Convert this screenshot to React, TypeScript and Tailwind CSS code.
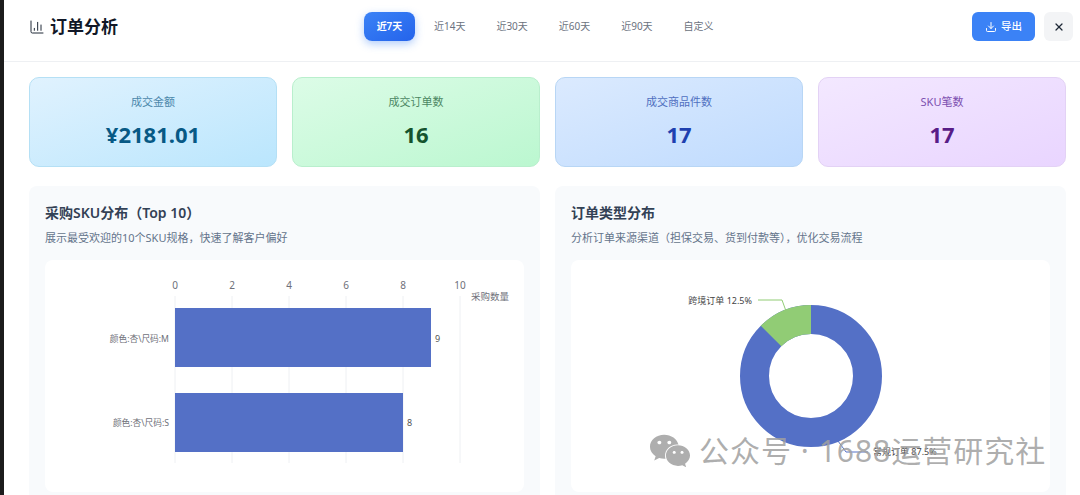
import { ChartColumn, Download, X } from "lucide-react";
import { FaWeixin } from "react-icons/fa";

const tabs = ["近14天", "近30天", "近60天", "近90天", "自定义"];

const stats = [
  { label: "成交金额", value: "¥2181.01", box: "from-[#e0f2fe] to-[#bae6fd] border-[#b5e0f5]", labelColor: "text-[#4b87ab]", valueColor: "text-[#075985]" },
  { label: "成交订单数", value: "16", box: "from-[#dcfce7] to-[#bbf7d0] border-[#b9efcd]", labelColor: "text-[#4c8763]", valueColor: "text-[#14532d]" },
  { label: "成交商品件数", value: "17", box: "from-[#dbeafe] to-[#bfdbfe] border-[#b8d6f5]", labelColor: "text-[#4f6fc0]", valueColor: "text-[#1e40af]" },
  { label: "SKU笔数", value: "17", box: "from-[#f3e8ff] to-[#e9d5ff] border-[#e3d2f5]", labelColor: "text-[#7c4fb0]", valueColor: "text-[#581c87]" },
];

function BarChart() {
  const ticks = [0, 2, 4, 6, 8, 10];
  return (
    <svg width="480" height="232" viewBox="45 260 480 232" className="block">
      {ticks.map((t) => (
        <g key={t}>
          <line x1={175 + t * 28.5} x2={175 + t * 28.5} y1="296" y2="463" stroke="#eef0f3" />
          <text x={175 + t * 28.5} y="289" textAnchor="middle" fontSize="10" fill="#6e7079">{t}</text>
        </g>
      ))}
      <rect x="175" y="308" width="256" height="59" fill="#5470c6" />
      <rect x="175" y="393" width="228" height="59" fill="#5470c6" />
      <text x="471" y="300" fontSize="9.5" fill="#6e7079">采购数量</text>
      <text x="169" y="342" textAnchor="end" fontSize="8.7" fill="#6e7079">颜色:杏\尺码:M</text>
      <text x="169" y="426" textAnchor="end" fontSize="8.7" fill="#6e7079">颜色:杏\尺码:S</text>
      <text x="435" y="342" fontSize="9" fill="#555">9</text>
      <text x="407" y="426" fontSize="9" fill="#555">8</text>
    </svg>
  );
}

function DonutChart() {
  return (
    <svg width="479" height="232" viewBox="571 260 479 232" className="block">
      <circle cx="811" cy="376" r="56.5" fill="none" stroke="#5470c6" strokeWidth="29" />
      <path d="M811 305 A71 71 0 0 0 760.8 325.8 L781.3 346.3 A42 42 0 0 1 811 334 Z" fill="#91cc75" />
      <polyline points="786,311 782,300 758,300" fill="none" stroke="#91cc75" />
      <text x="752" y="304" textAnchor="end" fontSize="9" fill="#444">跨境订单 12.5%</text>
      <polyline points="838,441 846,452 868,452" fill="none" stroke="#5470c6" />
      <text x="873" y="455" fontSize="9" fill="#444">常规订单 87.5%</text>
    </svg>
  );
}

export default function App() {
  return (
    <div
      className="relative h-[495px] w-[1080px] overflow-hidden border-l-4 border-[#1c1c1c] bg-white"
      style={{ fontFamily: '"Noto Sans", "Noto Sans CJK SC", sans-serif' }}
    >
      <header className="flex h-[62px] items-start border-b border-[#eef0f3] pl-[25px] pr-[7px] pt-[11px]">
        <div className="mt-[4px] flex w-[335px] items-center gap-[5px]">
          <ChartColumn className="h-[16px] w-[16px] text-[#1f2937]" strokeWidth={1.5} />
          <h1 className="text-[17px] font-bold leading-[24px] text-[#111827]">订单分析</h1>
        </div>
        <nav className="flex h-[30px] flex-1 items-center">
          <button className="mr-[19px] flex h-[29px] w-[51px] items-center justify-center rounded-lg bg-gradient-to-br from-[#3b82f6] to-[#2563eb] text-[10px] font-semibold text-white shadow-[0_3px_8px_rgba(59,130,246,0.4)]">
            近7天
          </button>
          {tabs.map((t) => (
            <span key={t} className="w-[62.4px] shrink-0 text-[10px] text-[#6b7280]">
              {t}
            </span>
          ))}
        </nav>
        <button className="mr-[9px] mt-[1px] flex h-[29px] w-[63px] items-center justify-center gap-[4px] rounded-md bg-[#3b82f6] text-[10.5px] font-medium text-white">
          <Download className="h-[12px] w-[12px]" />
          导出
        </button>
        <button className="mt-[1px] flex h-[29px] w-[29px] items-center justify-center rounded-md bg-[#f3f4f6] text-[#1f2937]">
          <X className="h-[12px] w-[12px]" strokeWidth={2.5} />
        </button>
      </header>

      <div className="pl-[25px] pr-[14px] pt-[15px]">
        <div className="grid grid-cols-4 gap-[15px]">
          {stats.map((s) => (
            <div key={s.label} className={`flex h-[90px] flex-col items-center rounded-[10px] border bg-gradient-to-br pt-[16px] ${s.box}`}>
              <div className={`text-[11px] leading-[16px] ${s.labelColor}`}>{s.label}</div>
              <div className={`mt-[8px] text-[22px] font-bold leading-[32px] ${s.valueColor}`}>{s.value}</div>
            </div>
          ))}
        </div>

        <div className="mt-[19px] grid grid-cols-2 gap-[15px]">
          <section className="h-[320px] rounded-lg bg-[#f8fafc] px-[16px] pt-[17px]">
            <h2 className="text-[14px] font-semibold leading-[20px] text-[#334155]">采购SKU分布（Top 10）</h2>
            <p className="mt-[7px] text-[11px] leading-[16px] text-[#64748b]">展示最受欢迎的10个SKU规格，快速了解客户偏好</p>
            <div className="mt-[14px] h-[232px] overflow-hidden rounded-lg bg-white">
              <BarChart />
            </div>
          </section>
          <section className="h-[320px] rounded-lg bg-[#f8fafc] px-[16px] pt-[17px]">
            <h2 className="text-[14px] font-semibold leading-[20px] text-[#334155]">订单类型分布</h2>
            <p className="mt-[7px] text-[11px] leading-[16px] text-[#64748b]">分析订单来源渠道（担保交易、货到付款等），优化交易流程</p>
            <div className="mt-[14px] h-[232px] overflow-hidden rounded-lg bg-white">
              <DonutChart />
            </div>
          </section>
        </div>
      </div>

      {/* watermark over the page */}
      <div className="absolute left-[645px] top-[430px] flex items-center text-[#a0a0a0]/85">
        <FaWeixin className="h-[42px] w-[42px]" />
        <span className="ml-[8px] text-[30px] leading-[42px] tracking-[1px]">公众号 · 1688运营研究社</span>
      </div>
    </div>
  );
}
